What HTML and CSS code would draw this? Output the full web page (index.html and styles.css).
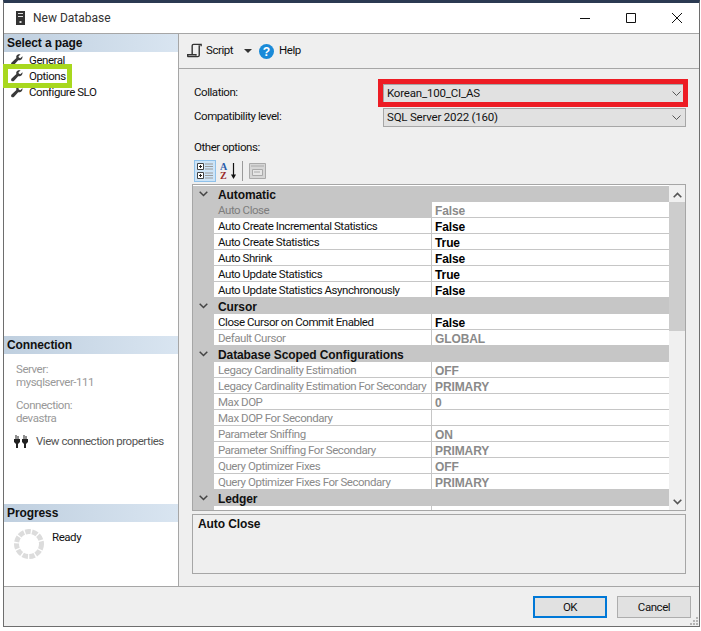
FILE: index.html
```html
<!DOCTYPE html>
<html lang="en">
<head>
<meta charset="utf-8">
<title>New Database</title>
<link rel="stylesheet" href="styles.css">
</head>
<body>
<svg class="defs" width="0" height="0">
  <symbol id="wrench" viewBox="0 0 12 12">
    <path d="M11.5 2.2 9.3 4.2 7.8 3.6 7.5 2.2 9.6.4C7.8-.2 6 .4 5.4 2c-.3.8-.2 1.500 0 2.100L.6 8.500C-.1 9.200 0 10.200.6 10.900c.7.600 1.700.6 2.300 0l4.300-4.700c.8.200 1.600.2 2.300-.1 1.500-.7 2.200-2.300 2-3.900z" fill="#3a3a3a"/>
  </symbol>
</svg>
<div class="window">
  <header class="titlebar">
    <svg class="app-icon" width="9" height="14" viewBox="0 0 9 14"><path d="M0 0h9v14H0z" fill="#333"/><path d="M2 2h5v1H2zM2 5h5v1H2z" fill="#ddd"/><path d="M3.500 10h2v2h-2z" fill="#ddd"/></svg>
    <span class="title">New Database</span>
    <div class="caption">
      <svg width="12" height="12" viewBox="0 0 12 12"><path d="M1 6.500h10" stroke="#111" fill="none"/></svg>
      <svg width="12" height="12" viewBox="0 0 12 12"><path d="M1.500 1.500h9v9h-9z" stroke="#111" fill="none"/></svg>
      <svg width="12" height="12" viewBox="0 0 12 12"><path d="M1 1l10 10M11 1 1 11" stroke="#111" fill="none"/></svg>
    </div>
  </header>
  <div class="body">
    <aside class="sidebar">
      <h2 class="band">Select a page</h2>
      <ul class="pages">
        <li><svg class="wrench"><use href="#wrench"/></svg>General</li>
        <li><svg class="wrench"><use href="#wrench"/></svg>Options</li>
        <li><svg class="wrench"><use href="#wrench"/></svg>Configure SLO</li>
      </ul>
      <span class="page-mark"></span>
      <div class="spacer"></div>
      <h2 class="band">Connection</h2>
      <div class="conn">
        <p class="muted">Server:<br>mysqlserver-111</p>
        <p class="muted">Connection:<br>devastra</p>
        <div class="conn-link">
          <svg class="plug" width="14" height="14" viewBox="0 0 14 14"><path d="M0 5h6v3L4 10v4H2v-4L0 8zM8 5h6v3l-2 2v4h-2v-4L8 8z" fill="#222"/><path d="M1.500 1h1v4h-1zM3.500 2h1v3h-1zM9.500 1h1v4h-1zM11.500 2h1v3h-1z" fill="#222"/></svg>
          <span>View connection properties</span>
        </div>
      </div>
      <h2 class="band">Progress</h2>
      <div class="progress">
        <svg width="32" height="32" viewBox="0 0 32 32"><circle cx="16" cy="16" r="12.500" fill="none" stroke="#dcdcdc" stroke-width="5" stroke-dasharray="5.500 1.350"/></svg>
        <span>Ready</span>
      </div>
    </aside>
    <main class="content">
      <div class="toolbar">
        <svg width="16" height="16" viewBox="0 0 17 16"><path d="M5.500 12V2.500c0-1 .5-1.500 1.500-1.500h8v2" fill="none" stroke="#333" stroke-width="1.500"/><path d="M13 2v10.500c0 1-.6 1.500-1.500 1.500H2c-1 0-1.500-.6-1.500-1.500V12h9v1" fill="none" stroke="#333" stroke-width="1.500"/></svg>
        <span class="tool-label">Script</span>
        <span class="drop"></span>
        <svg class="help" width="15" height="15" viewBox="0 0 16 16"><circle cx="8" cy="8" r="8" fill="#1a8ad8"/><text x="8" y="12.500" text-anchor="middle" class="help-q">?</text></svg>
        <span class="tool-label">Help</span>
      </div>
      <div class="pane">
        <div class="form-row first">
          <span class="label">Collation:</span>
          <div class="combo"><span>Korean_100_CI_AS</span><svg width="9" height="5" viewBox="0 0 9 5"><path d="M.5.500l4 4 4-4" fill="none" stroke="#555"/></svg></div>
          <span class="red-mark"></span>
        </div>
        <div class="form-row">
          <span class="label">Compatibility level:</span>
          <div class="combo"><span>SQL Server 2022 (160)</span><svg width="9" height="5" viewBox="0 0 9 5"><path d="M.5.500l4 4 4-4" fill="none" stroke="#555"/></svg></div>
        </div>
        <div class="other">Other options:</div>
        <div class="grid-tools">
          <span class="tool-on">
            <svg width="18" height="18" viewBox="0 0 18 18"><path d="M1.500 1.500h6v6h-6zM1.500 10.500h6v6h-6z" fill="#fff" stroke="#444"/><path d="M3 4.500h3M4.500 3v3M3 13.500h3M4.500 12v3" stroke="#222"/><path d="M9 2h8M9 4.500h8M9 7h8M9 11h8M9 13.500h8M9 16h8" stroke="#9a9a9a"/></svg>
          </span>
          <svg class="az" width="18" height="18" viewBox="0 0 18 18"><text x="0" y="8" class="az-a">A</text><text x="0" y="17" class="az-z">Z</text><path d="M13.500 1v14" stroke="#111" stroke-width="1.200"/><path d="M11 12.500h5L13.500 17z" fill="#111"/></svg>
          <span class="tool-sep"></span>
          <svg class="prop" width="17" height="16" viewBox="0 0 17 16"><path d="M.500.500h16v15H.500z" fill="#d6d6d6" stroke="#aaa"/><path d="M2 3h13" stroke="#aaa"/><path d="M3.500 6.500h10v6h-10z" fill="#e6e6e6" stroke="#aaa"/><path d="M5 9h6" stroke="#aaa"/></svg>
        </div>
        <div class="grid">
          <div class="rows">
            <div class="cat"><svg width="9" height="6" viewBox="0 0 9 6"><path d="M.7.700l3.800 3.800L8.300.7" fill="none" stroke="#444" stroke-width="1.500"/></svg><span>Automatic</span></div>
            <div class="row selected"><span class="n">Auto Close</span><span class="v">False</span></div>
            <div class="row on"><span class="n">Auto Create Incremental Statistics</span><span class="v">False</span></div>
            <div class="row on"><span class="n">Auto Create Statistics</span><span class="v">True</span></div>
            <div class="row on"><span class="n">Auto Shrink</span><span class="v">False</span></div>
            <div class="row on"><span class="n">Auto Update Statistics</span><span class="v">True</span></div>
            <div class="row on"><span class="n">Auto Update Statistics Asynchronously</span><span class="v">False</span></div>
            <div class="cat"><svg width="9" height="6" viewBox="0 0 9 6"><path d="M.7.700l3.800 3.800L8.300.7" fill="none" stroke="#444" stroke-width="1.500"/></svg><span>Cursor</span></div>
            <div class="row on"><span class="n">Close Cursor on Commit Enabled</span><span class="v">False</span></div>
            <div class="row"><span class="n">Default Cursor</span><span class="v">GLOBAL</span></div>
            <div class="cat"><svg width="9" height="6" viewBox="0 0 9 6"><path d="M.7.700l3.800 3.800L8.300.7" fill="none" stroke="#444" stroke-width="1.500"/></svg><span>Database Scoped Configurations</span></div>
            <div class="row"><span class="n">Legacy Cardinality Estimation</span><span class="v">OFF</span></div>
            <div class="row"><span class="n">Legacy Cardinality Estimation For Secondary</span><span class="v">PRIMARY</span></div>
            <div class="row"><span class="n">Max DOP</span><span class="v">0</span></div>
            <div class="row"><span class="n">Max DOP For Secondary</span><span class="v"></span></div>
            <div class="row"><span class="n">Parameter Sniffing</span><span class="v">ON</span></div>
            <div class="row"><span class="n">Parameter Sniffing For Secondary</span><span class="v">PRIMARY</span></div>
            <div class="row"><span class="n">Query Optimizer Fixes</span><span class="v">OFF</span></div>
            <div class="row"><span class="n">Query Optimizer Fixes For Secondary</span><span class="v">PRIMARY</span></div>
            <div class="cat"><svg width="9" height="6" viewBox="0 0 9 6"><path d="M.7.700l3.800 3.800L8.300.7" fill="none" stroke="#444" stroke-width="1.500"/></svg><span>Ledger</span></div>
            <div class="row on"><span class="n">Is Ledger Database</span><span class="v">False</span></div>
          </div>
          <div class="scrollbar">
            <svg width="9" height="6" viewBox="0 0 9 6"><path d="M.7 5.300 4.500 1.500l3.800 3.800" fill="none" stroke="#555" stroke-width="1.600"/></svg>
            <div class="track"><div class="thumb"></div></div>
            <svg width="9" height="6" viewBox="0 0 9 6"><path d="M.7.700l3.800 3.800L8.300.7" fill="none" stroke="#555" stroke-width="1.600"/></svg>
          </div>
        </div>
        <div class="desc"><strong>Auto Close</strong></div>
      </div>
    </main>
  </div>
  <footer class="footer">
    <button class="btn default">OK</button>
    <button class="btn">Cancel</button>
    <svg class="grip" width="8" height="8" viewBox="0 0 8 8"><path d="M6 0h2v2H6zM3 3h2v2H3zM6 3h2v2H6zM0 6h2v2H0zM3 6h2v2H3zM6 6h2v2H6z" fill="#b5b5b5"/></svg>
  </footer>
</div>
</body>
</html>
```
FILE: styles.css
```css
* { box-sizing: border-box; }
html, body { margin: 0; padding: 0; }
body {
  width: 701px;
  height: 631px;
  overflow: hidden;
  background: #fff;
  font: 11.5px/16px Roboto, "Liberation Sans", Arial, sans-serif;
  letter-spacing: -0.45px;
  color: #111;
}
strong, .band, .cat, .v {
  font-family: "Liberation Sans", Arial, sans-serif;
  font-size: 12px;
  letter-spacing: -0.1px;
}
.defs { position: absolute; }
.window {
  margin-left: 3px;
  width: 697px;
  height: 627px;
  border: 1px solid #6e6e6e;
  border-top: 3px solid #2b3a52;
  display: flex;
  flex-direction: column;
  background: #efefef;
}
.titlebar {
  height: 31px;
  flex: none;
  display: flex;
  align-items: center;
  background: #fff;
  border-bottom: 1px solid #a6a6a6;
  padding-left: 12px;
}
.title { margin-left: 8px; color: #333; font-size: 12px; letter-spacing: 0; }
.caption {
  margin-left: auto;
  display: flex;
  gap: 34px;
  padding-right: 16px;
}
.body { flex: 1; display: flex; min-height: 0; }
.sidebar {
  width: 175px;
  flex: none;
  background: #fff;
  border-right: 1px solid #a6a6a6;
  display: flex;
  flex-direction: column;
  position: relative;
}
.band {
  margin: 0;
  height: 18px;
  padding-left: 3px;
  line-height: 18px;
  font-weight: bold;
  color: #111;
  background: linear-gradient(90deg, #bfcfdf, #d9e5f1);
}
.pages { list-style: none; margin: 0; padding: 0 0 0 7px; }
.pages li { height: 16px; display: flex; align-items: center; gap: 6px; color: #111; }
.wrench { width: 12px; height: 12px; }
.page-mark {
  position: absolute;
  left: -1px;
  top: 30px;
  width: 69px;
  height: 24px;
  border: 5px solid #a8d81e;
}
.spacer { flex: 1; }
.conn { height: 150px; padding: 9px 0 0 12px; }
.muted { margin: 0 0 10px; color: #999; line-height: 13px; }
.conn-link { display: flex; align-items: center; gap: 8px; margin: -2px 0 0 -2px; color: #555; white-space: nowrap; }
.plug { flex: none; }
.progress { height: 64px; padding: 6px 0 0 9px; display: flex; gap: 7px; align-items: flex-start; color: #111; }
.progress span { margin-top: 1px; }
.content { flex: 1; display: flex; flex-direction: column; min-width: 0; }
.toolbar {
  height: 35px;
  flex: none;
  display: flex;
  align-items: center;
  padding-left: 8px;
  border-bottom: 1px solid #a6a6a6;
}
.tool-label { margin: -2px 0 0 3px; color: #111; }
.drop {
  margin-left: 11px;
  width: 0;
  height: 0;
  border: 4px solid transparent;
  border-top: 4px solid #333;
  border-bottom: 0;
}
.help { margin-left: 7px; }
.help + .tool-label { margin-left: 5px; }
.help-q { font: bold 13px "Liberation Sans", sans-serif; fill: #fff; letter-spacing: 0; }
.pane { flex: 1; display: flex; flex-direction: column; padding: 0 13px; }
.form-row { display: flex; align-items: center; height: 24px; position: relative; }
.form-row.first { margin-top: 12px; }
.label { width: 191px; padding: 0 0 2px 2px; color: #111; }
.combo {
  flex: 1;
  height: 19px;
  border: 1px solid #a6a6a6;
  background: #e1e1e1;
  display: flex;
  align-items: center;
  justify-content: space-between;
  padding: 0 4px 0 3px;
  color: #111;
  letter-spacing: -0.2px;
}
.red-mark {
  position: absolute;
  left: 186px;
  top: -2px;
  right: -2px;
  height: 28px;
  border: 5px solid #ed1c24;
}
.other { margin-top: 9px; height: 16px; padding-top: 1px; margin-left: 2px; color: #111; }
.grid-tools { margin-top: 6px; height: 22px; display: flex; align-items: center; margin-left: 2px; }
.tool-on {
  width: 22px;
  height: 22px;
  display: flex;
  align-items: center;
  justify-content: center;
  background: #cde4f7;
  border: 1px solid #8fc1ea;
}
.az { margin-left: 4px; }
.az-a { font: bold 10px "Liberation Serif", serif; fill: #2a5caa; letter-spacing: 0; }
.az-z { font: bold 10px "Liberation Serif", serif; fill: #9a2a2a; letter-spacing: 0; }
.tool-sep { width: 1px; height: 20px; margin: 0 6px 0 4px; background: #9a9a9a; }
.grid {
  margin-top: 2px;
  height: 327px;
  flex: none;
  display: flex;
  border: 1px solid #a6a6a6;
  background: #fff;
  overflow: hidden;
}
.rows { flex: 1; min-width: 0; padding-top: 1px; background: #fff; overflow: hidden; }
.cat {
  height: 16px;
  padding-top: 2px;
  display: flex;
  align-items: center;
  background: #c6c6c6;
  font-weight: bold;
  color: #111;
}
.cat svg { margin-left: 6px; margin-top: -2px; }
.cat span { margin-left: 10px; }
.row {
  height: 16px;
  display: flex;
  margin-left: 21px;
  border-bottom: 1px solid #c6c6c6;
  color: #8a8a8a;
  position: relative;
}
.row::before {
  content: "";
  position: absolute;
  left: -21px;
  top: 0;
  bottom: -1px;
  width: 21px;
  background: #c6c6c6;
}
.n { width: 218px; flex: none; padding-left: 4px; line-height: 17px; border-right: 1px solid #c6c6c6; white-space: nowrap; overflow: hidden; }
.v { flex: 1; padding-left: 3px; font-weight: bold; line-height: 19px; }
.row.on .n { color: #111; }
.row.on .v { color: #000; }
.row.selected .n { background: #c6c6c6; color: #7d7d7d; }
.scrollbar {
  width: 16px;
  flex: none;
  background: #f0f0f0;
  display: flex;
  flex-direction: column;
  align-items: center;
  padding: 7px 0 5px;
}
.track { flex: 1; width: 100%; margin-top: 4px; margin-bottom: 3px; }
.thumb { height: 129px; background: #cdcdcd; }
.desc {
  margin-top: 3px;
  height: 60px;
  flex: none;
  border: 1px solid #a6a6a6;
  padding: 1px 5px;
}
.footer {
  height: 40px;
  flex: none;
  border-top: 1px solid #a6a6a6;
  display: flex;
  justify-content: flex-end;
  gap: 10px;
  padding: 9px 8px 0 0;
  position: relative;
}
.btn {
  width: 74px;
  height: 22px;
  border: 1px solid #adadad;
  background: #e1e1e1;
  font: inherit;
  letter-spacing: inherit;
  color: #111;
  padding: 0;
}
.btn.default { border: 2px solid #0078d7; }
.grip { position: absolute; right: 1px; bottom: 1px; }
```
